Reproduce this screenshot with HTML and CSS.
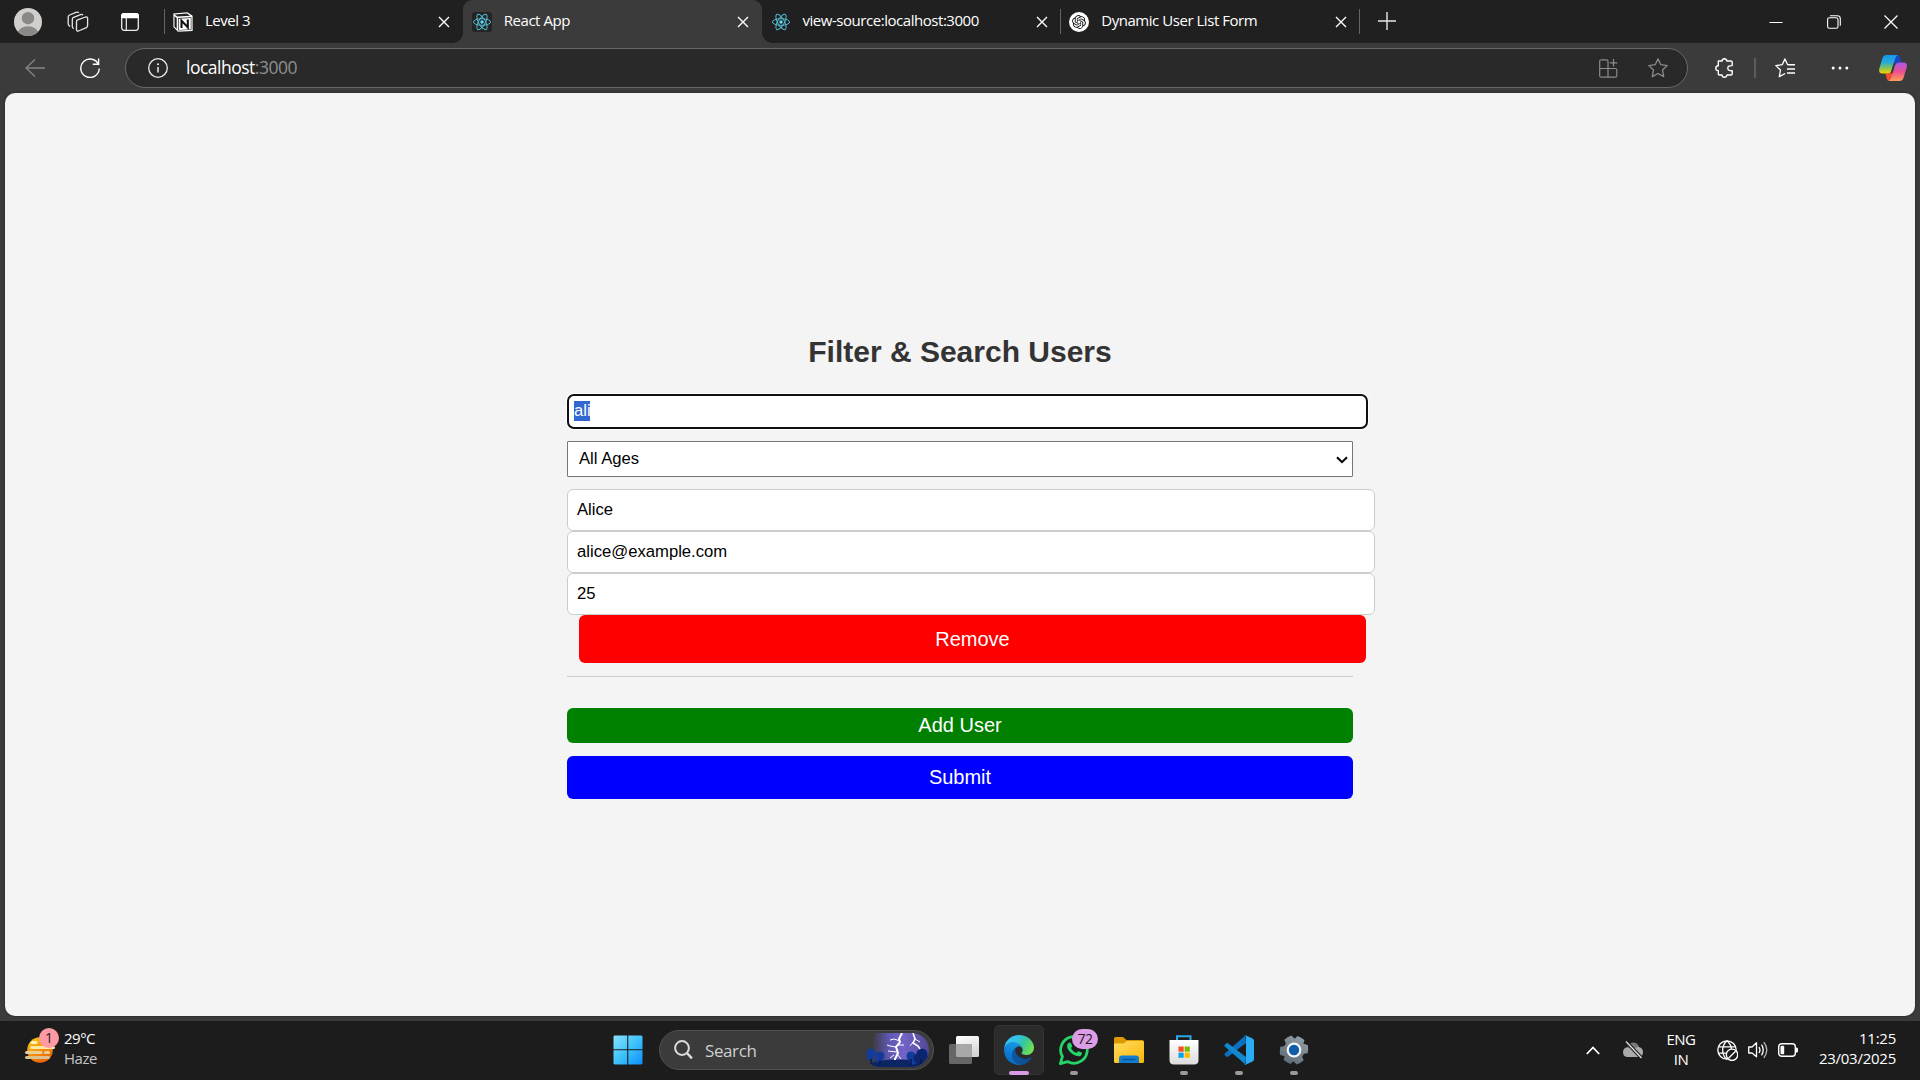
FILE: index.html
```html
<!DOCTYPE html>
<html lang="en">
<head>
<meta charset="utf-8">
<title>React App</title>
<link rel="stylesheet" href="styles.css">
</head>
<body>
<svg class="defs" width="0" height="0" aria-hidden="true">
  <symbol id="close" viewBox="0 0 12 12"><path d="M1 1l10 10M11 1L1 11" fill="none" stroke="#fff" stroke-width="1.4"/></symbol>
  <symbol id="react" viewBox="0 0 20 20">
    <g fill="none" stroke="#53b9d1" stroke-width="1">
      <ellipse cx="10" cy="10" rx="8.6" ry="3.3"/>
      <ellipse cx="10" cy="10" rx="8.6" ry="3.3" transform="rotate(60 10 10)"/>
      <ellipse cx="10" cy="10" rx="8.6" ry="3.3" transform="rotate(120 10 10)"/>
    </g>
    <circle cx="10" cy="10" r="1.7" fill="#61dafb"/>
  </symbol>
</svg>

<header class="tabstrip">
  <svg class="avatar" width="28" height="28" viewBox="0 0 28 28"><defs><clipPath id="av"><circle cx="14" cy="14" r="14"/></clipPath></defs><circle cx="14" cy="14" r="14" fill="#d1cfcd"/><g clip-path="url(#av)" fill="#8b8885"><circle cx="14" cy="10.2" r="6.2"/><ellipse cx="14" cy="26" rx="10.5" ry="7.8"/></g></svg>
  <svg class="workspaces" width="22" height="22" viewBox="0 0 22 22" fill="none" stroke="#e6e6e6" stroke-width="1.3" stroke-linejoin="round"><path d="M9.5 10.5Q9.5 9.3 10.6 8.9L18.6 6Q20.4 5.6 20.6 7.2V14.6Q20.6 16 19.4 16.6L11.4 20Q9.8 20.4 9.5 18.8Z"/><path d="M6.8 17.8Q5.3 17 5.3 15.6V8.4Q5.3 7 6.6 6.4L13.6 3.6Q15 3.2 16.2 4"/><path d="M3.2 15.4Q1.2 14.6 1.2 13V6Q1.2 4.6 2.6 4L9 1.4Q10.6.8 12 1.8"/></svg>
  <svg class="sidebar" width="18" height="18" viewBox="0 0 18 18"><rect x=".7" y=".7" width="16.6" height="16.6" rx="2.5" fill="none" stroke="#eee" stroke-width="1.3"/><path d="M0 5.2V3Q0 0 3 0H15Q18 0 18 3V5.2Z" fill="#fff"/><path d="M5.3 5V17" stroke="#eee" stroke-width="1.2"/></svg>
  <nav class="tabs">
    <div class="tab tab-divider">
      <svg width="20" height="20" viewBox="0 0 20 20"><path d="M.4 1.4L14.4.3 19.6 3.8V19L5 19.8.4 15Z" fill="#fff"/><path d="M1.6 2.5L14 1.5 17.2 3.7 4.5 4.6Z" fill="#222"/><path d="M1.5 4.2L3.7 6V17L1.5 14.6Z" fill="#222"/><path d="M5 6L18.4 5.2V17.8L5 18.6Z" fill="#222"/><path d="M5.7 6.7L17.8 6V17.2L5.7 18Z" fill="#fff"/><path d="M8.5 16V8.6L14.8 15.4V7.6" fill="none" stroke="#111" stroke-width="2.1"/></svg>
      <span class="tab-title">Level 3</span>
      <svg class="tab-close" width="12" height="12"><use href="#close"/></svg>
    </div>
    <div class="tab tab-active">
      <svg class="react-badge" width="20" height="20"><use href="#react"/></svg>
      <span class="tab-title">React App</span>
      <svg class="tab-close" width="12" height="12"><use href="#close"/></svg>
    </div>
    <div class="tab">
      <svg width="20" height="20"><use href="#react"/></svg>
      <span class="tab-title">view-source:localhost:3000</span>
      <svg class="tab-close" width="12" height="12"><use href="#close"/></svg>
    </div>
    <div class="tab tab-divider">
      <svg width="20" height="20" viewBox="0 0 20 20"><circle cx="10" cy="10" r="10" fill="#fff"/><path transform="translate(3.1 3.1) scale(.575)" fill="#111" d="M22.2819 9.8211a5.9847 5.9847 0 0 0-.5157-4.9108 6.0462 6.0462 0 0 0-6.5098-2.9A6.0651 6.0651 0 0 0 4.9807 4.1818a5.9847 5.9847 0 0 0-3.9977 2.9 6.0462 6.0462 0 0 0 .7427 7.0966 5.98 5.98 0 0 0 .511 4.9107 6.051 6.051 0 0 0 6.5146 2.9001A5.9847 5.9847 0 0 0 13.2599 24a6.0557 6.0557 0 0 0 5.7718-4.2058 5.9894 5.9894 0 0 0 3.9977-2.9001 6.0557 6.0557 0 0 0-.7475-7.0729zm-9.022 12.6081a4.4755 4.4755 0 0 1-2.8764-1.0408l.1419-.0804 4.7783-2.7582a.7948.7948 0 0 0 .3927-.6813v-6.7369l2.02 1.1686a.071.071 0 0 1 .038.052v5.5826a4.504 4.504 0 0 1-4.4945 4.4944zm-9.6607-4.1254a4.4708 4.4708 0 0 1-.5346-3.0137l.142.0852 4.783 2.7582a.7712.7712 0 0 0 .7806 0l5.8428-3.3685v2.3324a.0804.0804 0 0 1-.0332.0615L9.74 19.9502a4.4992 4.4992 0 0 1-6.1408-1.6464zM2.3408 7.8956a4.485 4.485 0 0 1 2.3655-1.9728V11.6a.7664.7664 0 0 0 .3879.6765l5.8144 3.3543-2.0201 1.1685a.0757.0757 0 0 1-.071 0l-4.8303-2.7865A4.504 4.504 0 0 1 2.3408 7.872zm16.5963 3.8558L13.1038 8.364 15.1192 7.2a.0757.0757 0 0 1 .071 0l4.8303 2.7913a4.4944 4.4944 0 0 1-.6765 8.1042v-5.6772a.79.79 0 0 0-.407-.667zm2.0107-3.0231l-.142-.0852-4.7735-2.7818a.7759.7759 0 0 0-.7854 0L9.409 9.2297V6.8974a.0662.0662 0 0 1 .0284-.0615l4.8303-2.7866a4.4992 4.4992 0 0 1 6.6802 4.66zM8.3065 12.863l-2.02-1.1638a.0804.0804 0 0 1-.038-.0567V6.0742a4.4992 4.4992 0 0 1 7.3757-3.4537l-.142.0805L8.704 5.459a.7948.7948 0 0 0-.3927.6813zm1.0976-2.3654l2.602-1.4998 2.6069 1.4998v2.9994l-2.5974 1.4997-2.6067-1.4997Z"/></svg>
      <span class="tab-title">Dynamic User List Form</span>
      <svg class="tab-close" width="12" height="12"><use href="#close"/></svg>
    </div>
  </nav>
  <div class="new-tab"><svg width="18" height="18" viewBox="0 0 18 18"><path d="M9 0v18M0 9h18" stroke="#e8e8e8" stroke-width="1.4"/></svg></div>
  <div class="window-buttons">
    <svg width="14" height="14" viewBox="0 0 14 14"><path d="M.5 7.5h13" stroke="#fff"/></svg>
    <svg width="14" height="14" viewBox="0 0 14 14" fill="none" stroke="#fff" stroke-width="1.1"><rect x=".6" y="2.8" width="10.4" height="10.4" rx="1.8"/><path d="M3 .8H10.4Q13.3.8 13.3 3.6V10.8"/></svg>
    <svg width="14" height="14" viewBox="0 0 14 14"><path d="M.5.5l13 13M13.5.5l-13 13" stroke="#fff" stroke-width="1.2"/></svg>
  </div>
</header>

<div class="toolbar">
  <svg class="back" width="20" height="18" viewBox="0 0 20 18" fill="none" stroke="#858585" stroke-width="1.3"><path d="M20 9H1M10 .5L1 9l9 8.5"/></svg>
  <svg class="reload" width="20" height="20" viewBox="0 0 20 20" fill="none" stroke="#fff" stroke-width="1.4"><path d="M18.6 7A9.2 9.2 0 1 0 19.2 10.5M18.6.5V6.2H12.8"/></svg>
  <div class="address">
    <svg width="20" height="20" viewBox="0 0 20 20"><circle cx="10" cy="10" r="9.3" fill="none" stroke="#eee" stroke-width="1.3"/><path d="M10 9v5.6" stroke="#eee" stroke-width="1.5"/><circle cx="10" cy="6.2" r="1" fill="#eee"/></svg>
    <span class="url">localhost<span class="port">:3000</span></span>
    <svg class="apps" width="19" height="19" viewBox="0 0 19 19" fill="none" stroke="#8b8b8b" stroke-width="1.2"><path d="M9 18.2H2.2Q.7 18.2.7 16.7V2.3Q.7.8 2.2.8H7.6Q9 .8 9 2.3V18.2M.7 9.500H16.3Q17.8 9.500 17.8 11V16.7Q17.8 18.2 16.3 18.2H9M14.5 0v7.5M10.8 3.8h7.6"/></svg>
    <svg class="star" width="20" height="20" viewBox="0 0 20 20" fill="none" stroke="#8b8b8b" stroke-width="1.3" stroke-linejoin="round"><path d="M10 .9l2.8 5.8 6.4.9-4.7 4.4 1.2 6.6L10 15.5l-5.7 3.1L5.5 12 .8 7.6l6.4-.9z"/></svg>
  </div>
  <svg class="puzzle" width="19" height="20" viewBox="0 0 19 20" fill="none" stroke="#fff" stroke-width="1.4" stroke-linejoin="round"><path d="M3.3 3H7.1Q7.3.8 9.4.8T11.8 3H16Q17.2 3 17.2 4.2V7.6Q12.8 7.4 12.8 10.2T17.2 12.8V15.8Q17.2 17 16 17H12Q11.6 19.3 9.4 19.3T7 17H4.4Q3.3 17 3.3 15.8V12.6Q.8 12.4.8 10.2T3.3 7.8Z"/></svg>
  <i class="bar"></i>
  <svg class="favourites" width="20" height="20" viewBox="0 0 20 20" fill="none" stroke="#fff" stroke-width="1.3" stroke-linejoin="round"><path d="M19.8 6.7H12.6L10 .9 7.2 6.7.8 7.6l4.7 4.4-1.2 6.6 5.9-3.1M12 11h8M12 15h8M13.5 6.9H20"/></svg>
  <svg class="dots" width="18" height="4" viewBox="0 0 18 4" fill="#fff"><circle cx="2.2" cy="2" r="1.5"/><circle cx="9" cy="2" r="1.5"/><circle cx="15.8" cy="2" r="1.5"/></svg>
  <svg class="copilot" width="28" height="26" viewBox="0 0 28 26">
    <defs>
      <linearGradient id="c1" x1="0" y1="0" x2="0" y2="1"><stop offset="0" stop-color="#1599ee"/><stop offset=".4" stop-color="#27a9d6"/><stop offset=".7" stop-color="#82c455"/><stop offset="1" stop-color="#ffd000"/></linearGradient>
      <linearGradient id="c2" x1="0" y1="0" x2="0" y2="1"><stop offset="0" stop-color="#a758ee"/><stop offset=".5" stop-color="#ec4f8d"/><stop offset="1" stop-color="#ff9f5b"/></linearGradient>
    </defs>
    <path d="M14 0H18Q20.4 0 21 2.5L22.3 7.500H20Q17 7.500 15.800 10L14 8Z" fill="#1c45c4"/>
    <path d="M6.500 18.500H8Q11.600 18.500 12.800 14.500L14.500 17 12 26H10.500Q8.300 26 7.600 23.500Z" fill="#ef4e31"/>
    <path d="M7.500 0H19Q17 .5 16 4L12.600 15Q11.600 18.500 8 18.500H3.500Q-.5 18.500.2 14L3.500 3Q4.500 0 7.500 0Z" fill="url(#c1)"/>
    <path d="M20.500 7.500H24.500Q28.500 7.500 27.800 12L24.500 23Q23.500 26 20.500 26H9Q11.500 25.500 12.400 22L15.600 11Q16.600 7.500 20.500 7.500Z" fill="url(#c2)"/>
    <path d="M14.600 8.500Q16 8 17.500 8Q16 9 15.600 11L13.600 18Q13 18.600 11.500 18.500Q12.200 17 12.600 15Z" fill="#3b3b3b"/>
  </svg>
</div>

<main class="page">
  <form class="users">
    <h2>Filter &amp; Search Users</h2>
    <div class="search-field"><span class="selected">ali</span></div>
    <div class="age-select"><span>All Ages</span><svg width="12" height="8" viewBox="0 0 12 8"><path d="M1 1.2l5 5 5-5" fill="none" stroke="#000" stroke-width="2"/></svg></div>
    <div class="user-row">
      <div class="field">Alice</div>
      <div class="field">alice@example.com</div>
      <div class="field">25</div>
      <div class="button remove">Remove</div>
    </div>
    <div class="button add">Add User</div>
    <div class="button submit">Submit</div>
  </form>
</main>

<footer class="taskbar">
  <div class="weather">
    <div class="weather-icon">
      <svg width="30" height="26" viewBox="0 0 30 26"><defs><linearGradient id="sun" x1=".2" y1="0" x2=".7" y2="1"><stop offset="0" stop-color="#ffc60a"/><stop offset="1" stop-color="#e95f09"/></linearGradient></defs><circle cx="15" cy="13" r="12.8" fill="url(#sun)"/><g stroke-width="3" stroke-linecap="round"><path d="M7 5.5h4" stroke="#fff1c2"/><path d="M6.500 10.500h22" stroke="#ffe7a5"/><path d="M1.500 15.500h14.500M20.500 15.500h3" stroke="#e9cf98"/><path d="M1.500 20.500h22" stroke="#ddc08c"/></g></svg>
      <span class="weather-count">1</span>
    </div>
    <div class="weather-text"><span>29°C</span><span class="muted">Haze</span></div>
  </div>
  <div class="apps-row">
    <div class="tile start"><svg width="30" height="30" viewBox="0 0 30 30"><defs><linearGradient id="win" gradientUnits="userSpaceOnUse" x1="0" y1="0" x2="30" y2="30"><stop offset="0" stop-color="#8be2ff"/><stop offset=".5" stop-color="#3fc3fb"/><stop offset="1" stop-color="#0a8bfa"/></linearGradient></defs><path d="M1.500.5H14.200V14.200H.5V1.500ZM15.300.5H28.500L29.500 1.500V14.200H15.300ZM.5 15.300H14.200V29.500H1.500L.5 28.500ZM15.300 15.300H29.500V28.500L28.500 29.500H15.300Z" fill="url(#win)"/></svg></div>
    <div class="search">
      <svg width="19" height="20" viewBox="0 0 19 20" fill="none" stroke="#dcdcdc"><circle cx="8" cy="8" r="6.900" stroke-width="2"/><path d="M12.900 13l5 5.300" stroke-width="2.500"/></svg>
      <span>Search</span>
      <svg class="storm" width="63" height="34" viewBox="0 0 63 34">
        <defs><linearGradient id="sky" x1="0" y1="0" x2="1" y2="0"><stop offset=".1" stop-color="#5b54b0" stop-opacity="0"/><stop offset=".35" stop-color="#5d56b0"/><stop offset=".6" stop-color="#7364c8"/><stop offset="1" stop-color="#4f4994"/></linearGradient><clipPath id="pill"><path d="M0 0H46A17 17 0 0 1 46 34H10Q0 30 0 20Z"/></clipPath></defs>
        <g clip-path="url(#pill)"><rect width="63" height="34" fill="url(#sky)"/>
        <ellipse cx="34" cy="31" rx="29" ry="4.500" fill="#0b2663"/>
        <g fill="#123b9c"><circle cx="5" cy="20" r="4.500"/><circle cx="4" cy="24" r="3.500"/><circle cx="14" cy="23" r="4.500"/><circle cx="12" cy="26" r="3"/><circle cx="45" cy="23" r="4.500"/><circle cx="47" cy="28" r="3.500"/></g>
        <g fill="#0c2570"><circle cx="56" cy="21" r="5.500"/><circle cx="52" cy="25" r="4.500"/><circle cx="59" cy="26" r="4"/></g>
        <path d="M5 26v5M14 27v5M45 26v6M55 26v5" stroke="#071749" stroke-width="1.400"/>
        <g fill="none" stroke="#fff"><path d="M36 0L33 6 34 9 30 14 32 20 29 26V27" stroke-width="2"/><path d="M34 8l-6-2-4 1M30 14l-6-1-3-1M32 12l6 0M31 19l-9-1M31 21l4 5M28 22l-4 3" stroke-width="1"/><path d="M47 0l2 6-2 4 5 3 2 3" stroke-width="1.600"/><path d="M49 6l5 3M47 9l-3 4" stroke-width=".9"/></g></g>
      </svg>
    </div>
    <div class="tile"><svg width="30" height="28" viewBox="0 0 30 28"><defs><linearGradient id="tv" x1="0" y1="0" x2=".3" y2="1"><stop offset="0" stop-color="#fff"/><stop offset="1" stop-color="#d6d6d6"/></linearGradient></defs><rect x="7" y="0" width="23" height="21" rx="1.500" fill="url(#tv)"/><rect x="0" y="8" width="23" height="20" rx="1.500" fill="#666"/><path d="M7 8H23V21H8.500Q7 21 7 19.500Z" fill="#a8a8a8"/></svg></div>
    <div class="tile tile-active"><svg width="30" height="30" viewBox="0 0 256 256">
      <defs>
        <linearGradient id="e1" x1="0" y1=".7" x2="1" y2=".7"><stop offset="0" stop-color="#0c59a4"/><stop offset="1" stop-color="#114a8b"/></linearGradient>
        <linearGradient id="e2" x1=".6" y1="0" x2=".3" y2="1"><stop offset="0" stop-color="#1b9de2"/><stop offset=".5" stop-color="#0f7fd8"/><stop offset="1" stop-color="#0669bb"/></linearGradient>
        <linearGradient id="e3" x1="0" y1=".2" x2="1" y2=".6"><stop offset="0" stop-color="#35c1f1"/><stop offset=".35" stop-color="#34c1ed"/><stop offset=".65" stop-color="#36c79a"/><stop offset="1" stop-color="#74e04c"/></linearGradient>
      </defs>
      <path d="M231 190.500c-3.400 1.800-6.900 3.400-10.500 4.700a101.700 101.700 0 0 1-35.900 6.500c-47.300 0-88.500-32.500-88.500-74.300a31.500 31.500 0 0 1 16.400-27.300c-42.800 1.800-53.800 46.400-53.800 72.500 0 73.900 68.100 81.400 82.800 81.400 7.900 0 19.800-2.300 27-4.600l1.300-.4a128.300 128.300 0 0 0 66.600-52.800 4 4 0 0 0-5.400-5.700z" fill="url(#e1)"/>
      <path d="M105.700 241.400a79.200 79.200 0 0 1-22.700-21.300 80.700 80.700 0 0 1 29.500-120c3.200-1.500 8.500-4.100 15.600-4a32.400 32.400 0 0 1 25.700 13 31.900 31.900 0 0 1 6.300 18.700c0-.2 24.500-79.600-80-79.600-43.900 0-80 41.700-80 78.200a130.200 130.200 0 0 0 12.100 56 128 128 0 0 0 156.400 67 75.600 75.600 0 0 1-62.800-8z" fill="url(#e2)"/>
      <path d="M152.300 148.900c-.8 1-3.300 2.500-3.300 5.700 0 2.600 1.700 5.100 4.700 7.200 14.400 10 41.500 8.700 41.600 8.700a59.600 59.600 0 0 0 30.300-8.300 61.400 61.400 0 0 0 30.400-52.900c.3-22.400-8-37.300-11.300-43.900C223.500 23.900 177.700 0 128 0A128 128 0 0 0 0 126.200c.5-36.500 36.800-66 80-66 3.500 0 23.500.3 42 10 16.300 8.600 24.900 19 30.800 29.200 6.200 10.700 7.300 24.100 7.300 29.500 0 5.300-2.700 13.300-7.800 20z" fill="url(#e3)"/>
    </svg></div>
    <div class="tile tile-running"><svg width="30" height="30" viewBox="0 0 30 30"><path d="M1.400 28.600L3.400 21.500A13.300 13.300 0 1 1 8.600 26.600Z" fill="none" stroke="#25d366" stroke-width="2.800" stroke-linejoin="round"/><path d="M10 7.800C7.400 9.300 7.400 12.600 10.400 16.300S18.600 22.400 21.700 20.700C23 19.700 23.400 18.200 22.600 17.600L19.600 16.200C18.400 15.900 18.200 18.300 16.600 17.600S12.800 14.600 12.300 13.400 13.600 12 13.200 11L12 8.300C11.600 7.400 10.800 7.500 10 7.800Z" fill="#25d366"/></svg><span class="count">72</span></div>
    <div class="tile"><svg width="30" height="26" viewBox="0 0 30 26"><defs><linearGradient id="fo" x1="0" y1="0" x2=".8" y2="1"><stop offset="0" stop-color="#ffdc62"/><stop offset="1" stop-color="#f9b90c"/></linearGradient></defs><path d="M0 8V1.500Q0 0 1.500 0H9L12.500 3H28Q30 3 30 5V8Z" fill="#dc9a00"/><path d="M0 6.500H9.500L13 4H28.500Q30 4 30 5.500V24.500Q30 26 28.500 26H1.500Q0 26 0 24.500Z" fill="url(#fo)"/><path d="M5 26V21.500Q5 18.500 8 18.500H22Q25 18.500 25 21.500V26Z" fill="#117cd0"/><path d="M8.500 22.500h13" stroke="#07509b" stroke-width="1.400"/></svg></div>
    <div class="tile tile-running"><svg width="30" height="30" viewBox="0 0 30 30"><defs><linearGradient id="st" x1="0" y1="0" x2="0" y2="1"><stop offset="0" stop-color="#fff"/><stop offset="1" stop-color="#dcdcdc"/></linearGradient></defs><path d="M8 6.500V1.200H21.500V6.500" fill="none" stroke="#28a9e8" stroke-width="2"/><path d="M.5 5H29.500V25Q29.500 29.500 25 29.500H5Q.5 29.500.5 25Z" fill="url(#st)"/><path d="M9.500 11.500h5.200v5.200H9.500z" fill="#f25022"/><path d="M15.600 11.500h5.200v5.200h-5.200z" fill="#7fba00"/><path d="M9.500 17.600h5.200v5.200H9.500z" fill="#00a4ef"/><path d="M15.600 17.600h5.200v5.200h-5.200z" fill="#ffb900"/></svg></div>
    <div class="tile tile-running"><svg width="30" height="30" viewBox="0 0 30 30"><path d="M22 8L4 21.800Q3 22.400 2.200 21.600L.6 20Q0 19.200.8 18.400L21.300.5Z" fill="#0b70bf"/><path d="M22 22L4 8.200Q3 7.600 2.200 8.400L.6 10Q0 10.800.8 11.600L21.300 29.500Z" fill="#1187d2"/><path d="M21.500.2L28.600 3.500Q30 4.200 30 5.700V24.300Q30 25.800 28.600 26.500L21.500 29.800Q20.600 30 20 29.400Q22 29.600 22 28V2Q22 .4 20 .6Q20.600 0 21.500.2Z" fill="#2aabf2"/></svg></div>
    <div class="tile tile-running"><svg width="30" height="30" viewBox="0 0 30 30"><defs><linearGradient id="ge" x1="0" y1="0" x2="0" y2="1"><stop offset="0" stop-color="#909ba3"/><stop offset="1" stop-color="#606c77"/></linearGradient></defs><path d="M11 1Q15 .4 19 1L20 5 24.500 3.800Q27.300 7 28.500 11L25.500 13.200Q25 15 25.500 16.800L28.500 19Q27.300 23 24.500 26.200L20 25 19 29Q15 29.600 11 29L10 25 5.500 26.200Q2.700 23 1.500 19L4.500 16.800Q5 15 4.500 13.200L1.500 11Q2.700 7 5.500 3.800L10 5Z" fill="url(#ge)" transform="rotate(30 15 15)"/><circle cx="15" cy="15" r="7.400" fill="#f4f6f8"/><circle cx="15" cy="15" r="5.200" fill="#0f5ca8"/></svg></div>
  </div>
  <div class="tray">
    <svg class="tray-up" width="14" height="9" viewBox="0 0 14 9"><path d="M.8 8L7 1.500 13.200 8" fill="none" stroke="#fff" stroke-width="1.800"/></svg>
    <svg class="tray-cloud" width="20" height="18" viewBox="0 0 20 18"><path d="M4.500 5.500Q7 1 11 1.500 15 2 16 6L10 10Z" fill="#777"/><path d="M4 16Q0 15.500 0 11 .3 6.500 5 6.300 8 6.500 10 8.500 13 5.500 16 6 20 7 20 11 20 15.500 16 16Z" fill="#a9a9a9"/><path d="M3 0.500L18.500 17" stroke="#1c1c1c" stroke-width="3.500"/><path d="M3 .5L18.500 17" stroke="#ddd" stroke-width="1.400"/></svg>
    <div class="language"><span>ENG</span><span>IN</span></div>
    <svg class="tray-net" width="21" height="21" viewBox="0 0 21 21" fill="none" stroke="#fff" stroke-width="1.300"><circle cx="10" cy="10" r="9.200"/><path d="M10 .8Q5 5 5.800 12 6.500 17 10 19.200M10 .8Q14.500 5 14.300 9M1.400 6.800H18.600M1.400 13.200H9"/><circle cx="15" cy="14.800" r="5.700" fill="#1c1c1c" stroke-width="1.400"/><path d="M11.500 18.300L18.600 11.200"/></svg>
    <svg class="tray-sound" width="20" height="18" viewBox="0 0 20 18" fill="none" stroke="#fff" stroke-width="1.300" stroke-linejoin="round"><path d="M.7 6H4L8.500 1.700V15.800L4 12H.7Z"/><path d="M11 6Q13 9 11 12M13.500 3.700Q17 9 13.500 14.300"/><path d="M15.800 1.200Q21.800 9 15.800 16.800" stroke="#bbb"/></svg>
    <svg class="tray-battery" width="20" height="14" viewBox="0 0 20 14"><rect x=".7" y=".7" width="16.600" height="12.600" rx="3" fill="none" stroke="#fff" stroke-width="1.400"/><rect x="2.500" y="2.800" width="3.700" height="8.400" rx="1" fill="#fff"/><path d="M18 4.500h.7Q20 4.500 20 6v2Q20 9.500 18.700 9.500H18Z" fill="#fff"/></svg>
    <div class="clock"><span>11:25</span><span>23/03/2025</span></div>
  </div>
</footer>
</body>
</html>
```
FILE: styles.css
```css
* { box-sizing: border-box; }
body {
  margin: 0;
  width: 1920px;
  height: 1080px;
  overflow: hidden;
  display: flex;
  flex-direction: column;
  background: #3b3b3b;
  color: #fff;
  font-family: "Open Sans", "Noto Sans", sans-serif;
  font-size: 15px;
}
svg { display: block; flex: none; }
.defs { position: absolute; }

/* tab strip */
.tabstrip { height: 43px; flex: none; display: flex; align-items: center; background: #202020; }
.avatar { margin-left: 14px; }
.workspaces { margin-left: 25px; }
.sidebar { margin-left: 32px; }
.tabs { display: flex; height: 43px; width: 1195px; margin-left: 25px; }
.tab { flex: 1; display: flex; align-items: center; padding: 1px 12.500px 0 9px; position: relative; }
.tab-divider::before,
.new-tab::before { content: ""; position: absolute; left: 0; top: 9px; width: 1px; height: 25px; background: #666; }
.tab-title { margin: -4px auto 0 12px; letter-spacing: -0.46px; white-space: nowrap; }
.tab-active { background: #3b3b3b; border-radius: 9px 9px 0 0; }
.tab-active::before,
.tab-active::after { content: ""; position: absolute; bottom: 0; width: 10px; height: 10px; }
.tab-active::before { left: -10px; background: radial-gradient(circle at 0 0, transparent 9.5px, #3b3b3b 10px); }
.tab-active::after { right: -10px; background: radial-gradient(circle at 100% 0, transparent 9.5px, #3b3b3b 10px); }
.react-badge { background: #242424; border-radius: 3px; }
.new-tab { position: relative; height: 43px; padding: 12px 0 0 19px; }
.window-buttons { display: flex; gap: 43.500px; margin: 0 22px 0 auto; }

/* toolbar */
.toolbar { height: 50px; flex: none; display: flex; align-items: center; }
.back { margin-left: 25px; }
.reload { margin-left: 35px; }
.address {
  width: 1563px;
  height: 40px;
  margin-left: 25px;
  padding: 0 19px 0 22px;
  display: flex;
  align-items: center;
  border: 1px solid #696969;
  border-radius: 20px;
  background: #292929;
}
.url { margin: -2px auto 0 18px; font-size: 17.500px; letter-spacing: -0.5px; }
.port { color: #8f8f8f; }
.star { margin-left: 30px; }
.puzzle { margin-left: 27px; }
.bar { width: 2px; height: 20px; margin-left: 20px; background: #5c5c5c; }
.favourites { margin-left: 19px; }
.dots { margin-left: 36px; }
.copilot { margin-left: 30px; }

/* page */
.page {
  width: 1910px;
  height: 923px;
  flex: none;
  margin-left: 5px;
  border-radius: 10px;
  display: flex;
  justify-content: center;
  background: #f4f4f4;
  color: #000;
  box-shadow: 0 0 3px rgba(0, 0, 0, .4);
  font-family: "Liberation Sans", Arial, sans-serif;
}
.users { width: 786px; margin-top: 241px; font-size: 16.667px; }
h2 { margin: 0; height: 60px; line-height: 35px; font-size: 30px; text-align: center; color: #333; }
.search-field {
  width: 801px;
  height: 35px;
  padding: 5px;
  border: 2px solid #101010;
  border-radius: 7px;
  background: #fff;
  box-shadow: 0 0 0 1px #fff;
}
.selected { display: inline-block; width: 16px; height: 20px; line-height: 19px; overflow: hidden; background: #3367d1; color: #fff; }
.age-select {
  height: 36px;
  margin-top: 12px;
  padding: 0 4px 0 11px;
  display: flex;
  align-items: center;
  justify-content: space-between;
  border: 1px solid #767676;
  border-radius: 1px;
  background: #fff;
}
.age-select svg { margin-top: 2px; }
.user-row { height: 188px; margin-top: 12px; border-bottom: 1px solid #ccc; }
.field {
  width: 808px;
  height: 42px;
  padding: 0 9px;
  line-height: 40px;
  border: 1px solid #ccc;
  border-radius: 6px;
  background: #fff;
}
.button { border-radius: 6px; color: #fff; font-size: 20px; text-align: center; }
.remove { width: 787px; height: 48px; line-height: 48px; margin-left: 12px; background: red; }
.add { height: 35px; line-height: 34px; margin-top: 31px; background: green; }
.submit { height: 43px; line-height: 42px; margin-top: 13px; background: blue; }

/* taskbar */
.taskbar {
  height: 59px;
  flex: none;
  margin-top: 5px;
  padding-bottom: 1px;
  display: flex;
  align-items: center;
  background: #1c1c1c;
}
.weather { width: 604px; display: flex; padding-left: 25px; }
.weather-icon { position: relative; width: 30px; padding-top: 7px; }
.weather-count {
  position: absolute;
  left: 14px;
  top: -2px;
  width: 20px;
  height: 20px;
  border-radius: 50%;
  background: #ff99a4;
  color: #222;
  text-align: center;
  line-height: 20px;
  font-size: 14px;
}
.weather-text { display: flex; flex-direction: column; margin: -2px 0 2px 9px; line-height: 20px; letter-spacing: -0.5px; }
.muted { color: #c4c4c4; }
.apps-row { display: flex; align-items: center; gap: 5px; }
.tile { position: relative; width: 50px; height: 50px; display: flex; align-items: center; justify-content: center; border-radius: 5px; }
.start { margin: 0 1px 0 -1px; }
.tile-active { background: #2b2b2b; border: 1px solid #333; }
.tile-active::after,
.tile-running::after {
  content: "";
  position: absolute;
  left: 50%;
  bottom: 0;
  width: 8px;
  height: 4px;
  margin-left: -4px;
  border-radius: 2px;
  background: #9a9a9a;
}
.tile-active::after { width: 20px; margin-left: -10px; background: #d89ae4; bottom: -1px; }
.count {
  position: absolute;
  left: 23px;
  top: 4px;
  width: 26px;
  height: 20px;
  border-radius: 10px;
  background: #dc9de6;
  color: #1c1c1c;
  text-align: center;
  line-height: 20px;
  font-size: 14px;
  letter-spacing: -0.5px;
}
.search {
  width: 275px;
  height: 40px;
  padding: 0 4px 0 14px;
  display: flex;
  align-items: center;
  border: 1px solid #505050;
  border-radius: 20px;
  background: #3b3b3b;
  color: #cfcfcf;
  font-size: 17px;
  letter-spacing: -0.4px;
}
.search span { margin: 0 auto 0 12px; }
.tray { display: flex; align-items: center; height: 58px; margin-left: auto; padding-right: 24px; }
.tray-cloud { margin-left: 23px; }
.language { width: 40px; display: flex; flex-direction: column; align-items: center; margin: -2px 0 0 18px; line-height: 20px; letter-spacing: -0.5px; }
.tray-net { margin-left: 16px; }
.tray-sound { margin-left: 10px; }
.tray-battery { margin-left: 10px; }
.clock { width: 98px; display: flex; flex-direction: column; align-items: flex-end; margin-top: -4px; line-height: 20px; letter-spacing: -0.25px; }
```
